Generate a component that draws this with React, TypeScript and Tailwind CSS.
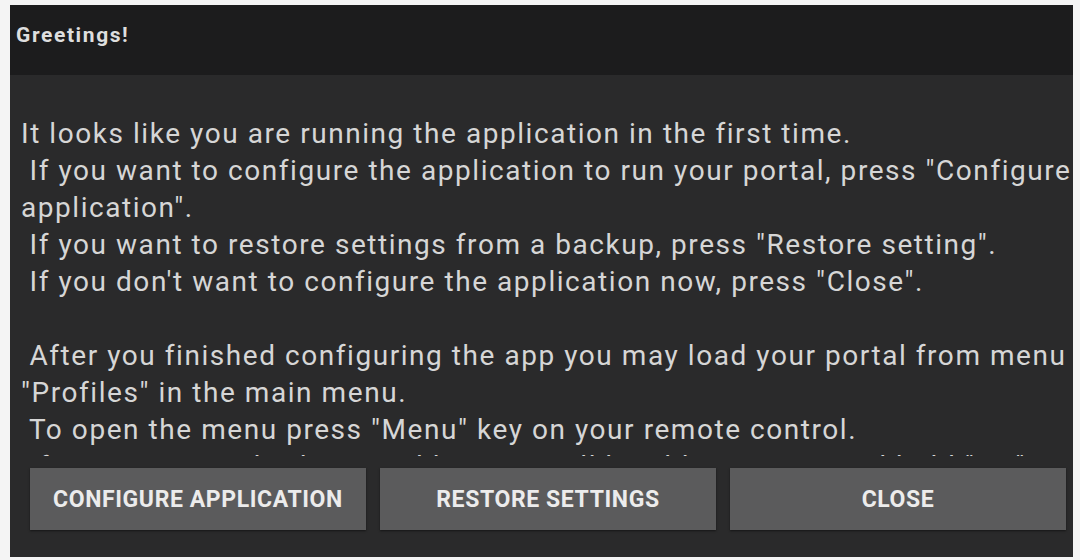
import React from "react";

const lines = [
  "It looks like you are running the application in the first time.",
  " If you want to configure the application to run your portal, press \"Configure",
  "application\".",
  " If you want to restore settings from a backup, press \"Restore setting\".",
  " If you don't want to configure the application now, press \"Close\".",
  " ",
  " After you finished configuring the app you may load your portal from menu",
  "\"Profiles\" in the main menu.",
  " To open the menu press \"Menu\" key on your remote control.",
  " If you want to edit the portal list, you will be able to press and hold \"OK\".",
];

export default function App() {
  return (
    <div
      className="w-[1080px] h-[560px] bg-[#f4f4f4] pt-[5px] pl-[10px] pr-[7px] overflow-hidden"
      style={{ fontFamily: "Roboto, 'Noto Sans', sans-serif" }}
    >
      <div className="flex flex-col h-[552px] bg-[#2a2a2b]">
        <div className="h-[70px] bg-[#1c1c1d] pl-[6px] pt-[18px] shrink-0">
          <div className="text-[21px] leading-[24px] font-bold tracking-[1.6px] text-[#dedede]">
            Greetings!
          </div>
        </div>
        <div className="h-[381px] overflow-hidden pt-[40px] pl-[11px] shrink-0">
          {lines.map((l, i) => (
            <div
              key={i}
              className="whitespace-pre text-[28px] leading-[37px] tracking-[1.55px] text-[#d6d6d6]"
            >
              {l}
            </div>
          ))}
        </div>
        <div className="grid grid-cols-3 gap-[14px] pl-[20px] pr-[7px] pt-[12px]">
          {["CONFIGURE APPLICATION", "RESTORE SETTINGS", "CLOSE"].map((t) => (
            <button
              key={t}
              className="h-[62px] pt-[3px] bg-[#5b5b5c] text-[#ececec] font-bold text-[23px] tracking-[0.6px] shadow-[0_1px_2px_rgba(0,0,0,0.5)]"
              style={{ fontFamily: "Roboto, sans-serif" }}
            >
              {t}
            </button>
          ))}
        </div>
      </div>
    </div>
  );
}
